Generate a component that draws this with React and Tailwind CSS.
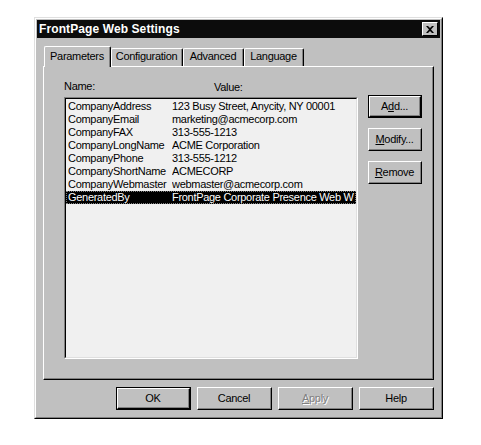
import React from "react";

const rows = [
  ["CompanyAddress", "123 Busy Street, Anycity, NY 00001"],
  ["CompanyEmail", "marketing@acmecorp.com"],
  ["CompanyFAX", "313-555-1213"],
  ["CompanyLongName", "ACME Corporation"],
  ["CompanyPhone", "313-555-1212"],
  ["CompanyShortName", "ACMECORP"],
  ["CompanyWebmaster", "webmaster@acmecorp.com"],
  ["GeneratedBy", "FrontPage Corporate Presence Web W"],
];

const font = { fontFamily: '"Liberation Sans", Arial, sans-serif' };

const Btn = ({ children, className = "", isDefault = false }) => (
  <div
    className={`flex items-center justify-center h-[23px] bg-[#c0c0c0] text-[11px] tracking-[-0.3px] text-black ${
      isDefault ? "border border-black" : ""
    } ${className}`}
  >
    <div className="flex-1 h-full flex items-center justify-center border-t border-l border-t-white border-l-white border-r border-b border-r-black border-b-black">
      <div className="flex-1 h-full flex items-center justify-center border-r border-b border-r-[#808080] border-b-[#808080]">
        {children}
      </div>
    </div>
  </div>
);

const Tab = ({ label, active, className = "" }) => (
  <div
    className={`flex items-center justify-center bg-[#c0c0c0] border-t border-l border-t-white border-l-white border-r border-r-black rounded-t-[2px] text-[11px] tracking-[-0.3px] ${
      active ? "h-[21px] -mb-px z-10 relative" : "h-[18px]"
    } ${className}`}
  >
    <div className="flex-1 h-full flex items-center justify-center border-r border-r-[#808080] pb-[2px]">
      {label}
    </div>
  </div>
);

export default function App() {
  return (
    <div className="w-[481px] h-[445px] bg-white pt-[17px] pl-[34px]" style={font}>
      <div className="w-[409px] h-[402px] bg-[#c0c0c0] border-t border-l border-t-[#dfdfdf] border-l-[#dfdfdf] border-r border-b border-r-black border-b-black">
        <div className="h-full border-t border-l border-t-white border-l-white border-r border-b border-r-[#808080] border-b-[#808080] p-px flex flex-col">
          <div className="h-[18px] bg-[#0c0c0c] flex items-center justify-between pl-[2px] pr-[2px]">
            <span className="text-white font-bold text-[12px] tracking-[0.1px]">FrontPage Web Settings</span>
            <div className="w-[16px] h-[14px] bg-[#c0c0c0] border-t border-l border-t-white border-l-white border-r border-b border-r-black border-b-black flex items-center justify-center">
              <svg width="8" height="7" viewBox="0 0 8 7">
                <path d="M0 0h2l2 2 2-2h2L5 3.5 8 7H6L4 5 2 7H0l3-3.5z" fill="#000" />
              </svg>
            </div>
          </div>

          <div className="ml-[6px] mt-[8px] w-[391px]">
            <div className="flex items-end h-[20px] pl-px">
              <Tab label="Parameters" active className="w-[67px]" />
              <Tab label="Configuration" className="w-[72px]" />
              <Tab label="Advanced" className="w-[61px]" />
              <Tab label="Language" className="w-[60px]" />
            </div>
            <div className="h-[314px] border-t border-l border-t-white border-l-white border-r border-b border-r-black border-b-black">
              <div className="h-full border-r border-b border-r-[#808080] border-b-[#808080] pl-[20px] pt-[11px] flex flex-col">
                <div className="flex text-[11px] tracking-[-0.3px] h-[16px] items-center">
                  <span className="w-[150px]">Name:</span>
                  <span className="mt-[2px]">Value:</span>
                </div>
                <div className="flex mt-[3px]">
                  <div className="w-[294px] h-[262px] bg-[#f0f0f0] border-t border-l border-t-[#808080] border-l-[#808080] border-r border-b border-r-white border-b-white">
                    <div className="h-full border-t border-l border-t-black border-l-black border-r border-b border-r-[#dfdfdf] border-b-[#dfdfdf] pt-[1px] text-[11px] tracking-[-0.3px]">
                      {rows.map(([name, value], i) => {
                        const sel = i === rows.length - 1;
                        return (
                          <div
                            key={name}
                            className={`flex h-[13px] items-center whitespace-nowrap overflow-hidden ${
                              sel ? "bg-black text-white outline-1 outline-dotted outline-[#808080] -outline-offset-1" : ""
                            }`}
                          >
                            <span className="w-[106px] pl-[2px] shrink-0">{name}</span>
                            <span className="flex-1 overflow-hidden">{value}</span>
                          </div>
                        );
                      })}
                    </div>
                  </div>
                  <div className="ml-[10px] flex flex-col gap-[10px] -mt-[2px]">
                    <Btn isDefault className="w-[54px]">
                      A<u>d</u>d...
                    </Btn>
                    <Btn className="w-[54px]">
                      <u>M</u>odify...
                    </Btn>
                    <Btn className="w-[54px]">
                      <u>R</u>emove
                    </Btn>
                  </div>
                </div>
              </div>
            </div>
            <div className="flex justify-end gap-[6px] mt-[7px]">
              <Btn isDefault className="w-[75px]">OK</Btn>
              <Btn className="w-[75px]">Cancel</Btn>
              <Btn className="w-[75px]">
                <span className="text-[#808080] [text-shadow:1px_1px_0_#fff]">
                  <u>A</u>pply
                </span>
              </Btn>
              <Btn className="w-[75px]">Help</Btn>
            </div>
          </div>
        </div>
      </div>
    </div>
  );
}
